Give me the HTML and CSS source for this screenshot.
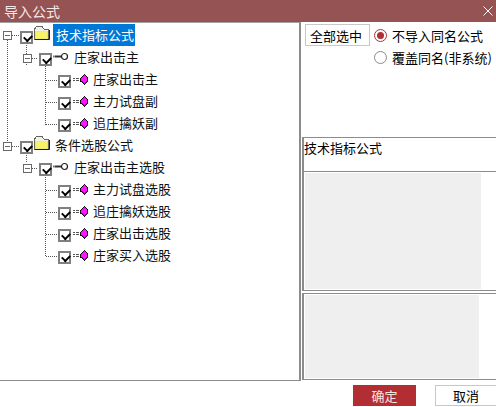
FILE: index.html
```html
<!DOCTYPE html>
<html lang="zh">
<head>
<meta charset="utf-8">
<title>导入公式</title>
<link rel="stylesheet" href="styles.css">
</head>
<body>
<svg class="defs" width="0" height="0" aria-hidden="true">
  <defs>
    <symbol id="folder" viewBox="0 0 16 14">
      <path d="M.5 13.5V3L2.5 .5H8L10 3H14.5V13.5Z" fill="#f2f2e8" stroke="#66665a" shape-rendering="crispEdges"/>
      <path d="M1 5H14V13H1Z" fill="#f2ea3c"/>
      <path d="M2 6H13M2 8H13M2 10H13M2 12H13M3 7H13M3 9H13M3 11H13" stroke="#fdfb9c" stroke-dasharray="1 1"/>
      <path d="M1 13.5H15.5V4" fill="none" stroke="#1a1a1a"/>
    </symbol>
    <symbol id="key" viewBox="0 0 16 9">
      <circle cx="11.5" cy="4.5" r="3" fill="#fff" stroke="#222" stroke-width="1.2"/>
      <path d="M1.5 4.5H8" stroke="#333" stroke-width="2"/>
      <path d="M.5 3.5V5.5" stroke="#777"/>
    </symbol>
    <symbol id="gem" viewBox="0 0 16 11">
      <path d="M0 4H2V5H0ZM3 4H6V5H3ZM0 6H2V7H0ZM3 6H6V7H3Z" fill="#555"/>
      <path d="M7 4H8V3H9V2H10V1H11V0H12V1H13V2H14V3H15V8H14V9H13V10H12V11H11V10H10V9H9V8H7Z" fill="#111"/>
      <path d="M8 4H9V3H10V2H11V1H12V2H13V3H14V7H13V8H12V9H11V8H10V7H8Z" fill="#ff14ff"/>
      <path d="M9 8H10V9H11V10H12V9H13V8H14V7H13V8H12V9H11V8H10V7H9Z" fill="#b000b0"/>
    </symbol>
  </defs>
</svg>

<header class="title-bar">
  <span class="title-text">导入公式</span>
  <svg class="close-icon" width="10" height="10" viewBox="0 0 10 10"><path d="M.5 .5L9.5 9.5M9.5 .5L.5 9.5" stroke="#fff" stroke-width="1"/></svg>
</header>

<main class="content">
  <section class="tree-panel">
    <svg class="tree-lines" width="80" height="240" viewBox="0 0 80 240" aria-hidden="true">
      <path d="M7.5 17V122M26.5 20V31M26.5 41V43M45.5 41V102M12 12.5H19M32 35.5H38M46 57.5H57M46 79.5H57M46 101.5H57M12 123.5H19M26.5 128V140M32 145.5H38M45.5 150V234M46 167.5H57M46 189.5H57M46 211.5H57M46 233.5H57" fill="none" stroke="#555" stroke-dasharray="1 1"/>
    </svg>
    <ul class="tree">
      <li class="row lvl0"><span class="exp"></span><span class="chk"></span><svg class="ico-folder"><use href="#folder"/></svg><span class="label selected">技术指标公式</span></li>
      <li class="row lvl1"><span class="exp"></span><span class="chk"></span><svg class="ico-key"><use href="#key"/></svg><span class="label">庄家出击主</span></li>
      <li class="row lvl2"><span class="chk"></span><svg class="ico-gem"><use href="#gem"/></svg><span class="label">庄家出击主</span></li>
      <li class="row lvl2"><span class="chk"></span><svg class="ico-gem"><use href="#gem"/></svg><span class="label">主力试盘副</span></li>
      <li class="row lvl2"><span class="chk"></span><svg class="ico-gem"><use href="#gem"/></svg><span class="label">追庄擒妖副</span></li>
      <li class="row lvl0 group-two"><span class="exp"></span><span class="chk"></span><svg class="ico-folder"><use href="#folder"/></svg><span class="label">条件选股公式</span></li>
      <li class="row lvl1"><span class="exp"></span><span class="chk"></span><svg class="ico-key"><use href="#key"/></svg><span class="label">庄家出击主选股</span></li>
      <li class="row lvl2"><span class="chk"></span><svg class="ico-gem"><use href="#gem"/></svg><span class="label">主力试盘选股</span></li>
      <li class="row lvl2"><span class="chk"></span><svg class="ico-gem"><use href="#gem"/></svg><span class="label">追庄擒妖选股</span></li>
      <li class="row lvl2"><span class="chk"></span><svg class="ico-gem"><use href="#gem"/></svg><span class="label">庄家出击选股</span></li>
      <li class="row lvl2"><span class="chk"></span><svg class="ico-gem"><use href="#gem"/></svg><span class="label">庄家买入选股</span></li>
    </ul>
  </section>

  <section class="side">
    <div class="options">
      <button class="select-all" type="button">全部选中</button>
      <div class="radios">
        <label class="radio-row"><span class="radio on"></span>不导入同名公式</label>
        <label class="radio-row"><span class="radio"></span>覆盖同名(非系统)</label>
      </div>
    </div>
    <div class="name-box">技术指标公式</div>
    <div class="preview preview-a"><div class="fill"></div></div>
    <div class="preview preview-b"><div class="fill"></div></div>
  </section>
</main>

<footer class="actions">
  <button class="btn primary" type="button">确定</button>
  <button class="btn secondary" type="button">取消</button>
</footer>
</body>
</html>
```
FILE: styles.css
```css
* { box-sizing: border-box; }
html, body { margin: 0; padding: 0; }
body {
  width: 496px;
  height: 407px;
  overflow: hidden;
  background: #fff;
  color: #000;
  font-family: "Noto Sans CJK SC", "Liberation Sans", sans-serif;
  font-size: 13px;
  display: flex;
  flex-direction: column;
}
.defs { position: absolute; }
.title-bar {
  height: 22px;
  flex: none;
  background: #955353;
  color: #fff;
  display: flex;
  align-items: center;
  justify-content: space-between;
  padding: 0 3px 0 4px;
}
.title-text { font-size: 14px; line-height: 20px; color: #f4e8e8; }
.content { height: 359px; flex: none; display: flex; }
.tree-panel {
  width: 301px;
  flex: none;
  position: relative;
  border: 1px solid #8c8c8c;
  border-left: 0;
  border-top: 1px solid #a0a0a0;
  border-right-width: 2px;
}
.tree-lines { position: absolute; left: 0; top: 0; pointer-events: none; }
.tree { list-style: none; margin: 0; padding: 1px 0 0; position: relative; }
.row { height: 22px; display: flex; align-items: center; }
.lvl0 { padding-left: 3px; }
.lvl1 { padding-left: 23px; }
.lvl2 { padding-left: 58px; }
.exp {
  width: 9px; height: 9px;
  border: 1px solid #6a6a6a;
  background: linear-gradient(#6a6a6a, #6a6a6a) center / 5px 1px no-repeat, #fff;
  flex: none;
  margin: 2px 7px 0 0;
}
.lvl0 .exp { margin: 0 8px 0 0; }
.lvl0.group-two .exp { margin-top: 3px; }
.chk {
  width: 13px; height: 13px;
  flex: none;
  border: 2px solid #808080;
  background: #fff;
  margin-top: 5px;
  position: relative;
}
.chk::after {
  content: "";
  position: absolute;
  left: 2px; top: 0;
  width: 6px; height: 4px;
  border-left: 2px solid #000;
  border-bottom: 2px solid #000;
  transform: rotate(-45deg) translate(-1px, 1px);
}
.ico-folder { width: 16px; height: 14px; margin: -5px 3px 0 1px; flex: none; }
.ico-key { width: 16px; height: 9px; margin: -2px 5px 0 1px; flex: none; }
.ico-gem { width: 16px; height: 11px; margin: 0 4px 0 2px; flex: none; }
.label { line-height: 22px; white-space: nowrap; color: #111; }
.label.selected { background: #0078d7; color: #fff; padding: 0 1px 0 3px; }
.group-two .label { margin-left: 2px; }

.side { flex: 1; min-width: 0; display: flex; flex-direction: column; padding-left: 1px; }
.options { height: 115px; flex: none; display: flex; align-items: flex-start; padding: 2px 0 0 3px; }
.select-all {
  width: 65px; height: 22px;
  padding: 0 3px 0 0;
  font: inherit;
  background: #fff;
  border: 1px solid #c8c8c8;
  color: #000;
}
.radios { margin-left: 4px; display: flex; flex-direction: column; }
.radio-row { height: 22px; display: flex; align-items: center; gap: 5px; white-space: nowrap; }
.radio { width: 13px; height: 13px; flex: none; border-radius: 50%; border: 1px solid #8a8a8a; background: #fff; position: relative; }
.radio.on { border-color: #a33; }
.radio.on::after { content: ""; position: absolute; left: 2px; top: 2px; width: 7px; height: 7px; border-radius: 50%; background: #b22e32; }
.name-box { height: 34px; flex: none; border: 0 solid #8c8c8c; border-width: 1px 0 0 2px; line-height: 20px; }
.preview { flex: none; border: 1px solid #8c8c8c; border-width: 1px 0 1px 2px; padding: 1px 0 0 1px; }
.preview-a { height: 120px; }
.preview-b { height: 87px; margin-top: 2px; }
.fill { height: calc(100% - 1px); background: #efefef; }
.preview-a .fill { width: 176px; }
.preview-b .fill { width: 174px; }

.actions { flex: 1; display: flex; justify-content: flex-end; gap: 19px; padding: 4px 0 0 0; }
.btn { height: 21px; padding: 0; font: inherit; background: #fff; border: 1px solid #c8c8c8; color: #000; }
.btn.primary { width: 63px; background: #b22e32; border-color: #b22e32; color: #f5e6e6; }
.btn.secondary { width: 61px; border-right: 0; }
```
